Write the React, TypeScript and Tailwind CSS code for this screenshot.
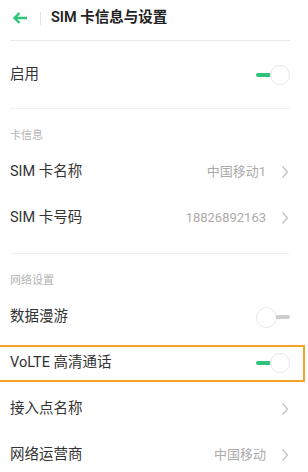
const font = { fontFamily: 'Roboto, "Noto Sans CJK SC", sans-serif' };

const Toggle = ({ on }: { on: boolean }) =>
  on ? (
    <div className="flex items-center">
      <div className="w-[15px] h-[4px] rounded-full bg-[#2fc479] -mr-[1px]" />
      <div className="w-[20px] h-[20px] rounded-full bg-white border border-[#e6e6e6]" />
    </div>
  ) : (
    <div className="flex items-center">
      <div className="w-[21px] h-[21px] rounded-full bg-white border border-[#e6e6e6]" />
      <div className="w-[14px] h-[4px] rounded-r-full bg-[#cfcfcf] -ml-[1px]" />
    </div>
  );

const Chevron = () => (
  <svg width="8" height="14" viewBox="0 0 8 14" className="ml-[15px] mr-[1px]">
    <path d="M1.5 1.5 L6.5 7 L1.5 12.5" fill="none" stroke="#c4c4c4" strokeWidth="1.4" />
  </svg>
);

const Row = ({ label, value, right }: { label: string; value?: string; right?: React.ReactNode }) => (
  <div className="h-[46px] flex items-center justify-between">
    <span className="text-[14.5px] text-[#333]">{label}</span>
    <div className="flex items-center">
      {value && <span className="text-[13px] text-[#ababab]">{value}</span>}
      {right ?? <Chevron />}
    </div>
  </div>
);

const Label = ({ text }: { text: string }) => (
  <div className="pt-[20px] pb-[7px] text-[11px] leading-[13px] text-[#b4b4b4]">{text}</div>
);

export default function App() {
  return (
    <div className="w-[308px] h-[472px] bg-white overflow-hidden" style={font}>
      <div className="h-[40px] flex items-center pl-[12px] pb-[4px]">
        <svg width="16" height="14" viewBox="0 0 16 14">
          <path d="M15 7 H2.5 M7.5 2 L2.5 7 L7.5 12" fill="none" stroke="#2fc479" strokeWidth="2.4" />
        </svg>
        <div className="w-px h-[13px] bg-[#e2e2e2] ml-[12px] mr-[10px]" />
        <span className="text-[14.5px] font-semibold text-[#222]">SIM 卡信息与设置</span>
      </div>
      <div className="pl-[10px] pr-[18px]">
        <div className="h-px bg-[#ebebeb]" />
        <div className="h-[67px] flex items-center justify-between">
          <span className="text-[14.5px] text-[#333]">启用</span>
          <Toggle on />
        </div>
        <div className="h-px bg-[#efefef]" />
        <Label text="卡信息" />
        <Row label="SIM 卡名称" value="中国移动1" />
        <Row label="SIM 卡号码" value="18826892163" />
        <div className="h-[12px]" />
        <div className="h-px bg-[#efefef]" />
        <Label text="网络设置" />
        <Row label="数据漫游" right={<Toggle on={false} />} />
        <div className="relative">
          <Row label="VoLTE 高清通话" right={<Toggle on />} />
          <div className="absolute top-[5px] bottom-[4px] -left-[12px] -right-[15px] border-2 border-[#f5a228]" />
        </div>
        <Row label="接入点名称" />
        <Row label="网络运营商" value="中国移动" />
      </div>
    </div>
  );
}
